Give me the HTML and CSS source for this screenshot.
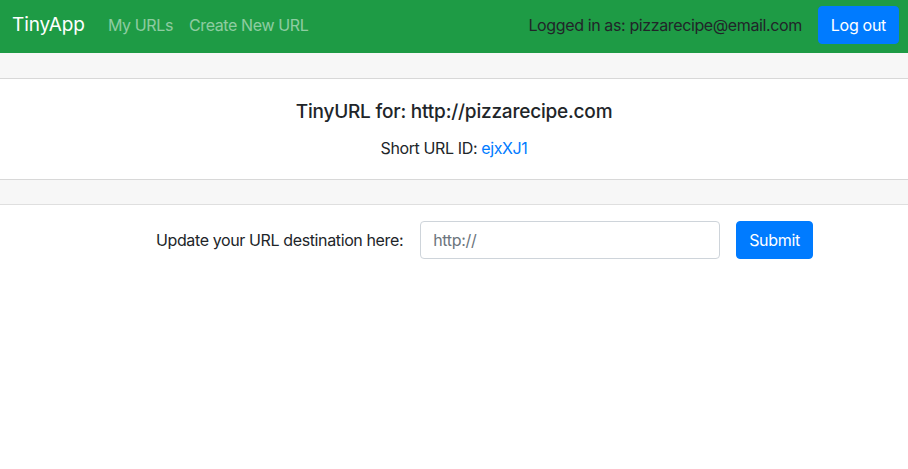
FILE: index.html
```html
<!DOCTYPE html>
<html lang="en">
<head>
<meta charset="utf-8">
<title>TinyApp</title>
<link rel="stylesheet" href="styles.css">
</head>
<body>
<nav class="navbar">
  <a class="brand" href="#">TinyApp</a>
  <div class="nav-links">
    <a class="nav-link" href="#">My URLs</a>
    <a class="nav-link" href="#">Create New URL</a>
  </div>
  <div class="nav-right">
    <span class="logged">Logged in as: pizzarecipe@email.com</span>
    <button class="btn btn-primary logout">Log out</button>
  </div>
</nav>
<div class="card">
  <div class="card-header"></div>
  <div class="card-body">
    <h5 class="card-title">TinyURL for: http://pizzarecipe.com</h5>
    <p class="card-text">Short URL ID: <a href="#">ejxXJ1</a></p>
  </div>
  <div class="card-footer"></div>
</div>
<form class="update-form">
  <label class="form-label" for="longURL">Update your URL destination here:</label>
  <input class="form-control" id="longURL" type="text" placeholder="http://">
  <button class="btn btn-primary submit" type="button">Submit</button>
</form>
</body>
</html>
```
FILE: styles.css
```css
* { box-sizing: border-box; }
html, body { margin: 0; padding: 0; }
body {
  font-family: Inter, "Liberation Sans", sans-serif;
  font-size: 16px;
  line-height: 1.5;
  letter-spacing: -0.38px;
  color: #212529;
  background: #fff;
  width: 908px;
  height: 469px;
  overflow: hidden;
}
a { text-decoration: none; }
.navbar {
  display: flex;
  align-items: center;
  height: 53px;
  padding: 0 9px 3px 12px;
  background: #1e9b45;
}
.brand {
  color: #fff;
  font-size: 19px;
  line-height: 30px;
  letter-spacing: -0.1px;
  margin-right: 23px;
}
.nav-links { display: flex; gap: 16px; }
.nav-link {
  color: rgba(255,255,255,0.5);
  font-size: 16px;
}
.nav-right {
  margin-left: auto;
  display: flex;
  align-items: center;
  gap: 16px;
}
.logged { color: #212529; }
.btn {
  font-family: inherit;
  font-size: 16px;
  line-height: 24px;
  letter-spacing: -0.3px;
  padding: 6px 12px;
  border: 1px solid transparent;
  border-radius: 4px;
  cursor: pointer;
}
.btn-primary { background: #007bff; border-color: #007bff; color: #fff; }
.logout { height: 38px; padding: 6px 12px; }
.card {
  border-bottom: 1px solid rgba(0,0,0,0.125);
}
.card-header, .card-footer {
  height: 26px;
  background: #f7f7f7;
}
.card-header { border-bottom: 1px solid rgba(0,0,0,0.125); }
.card-footer { border-top: 1px solid rgba(0,0,0,0.125); height: 25px; }
.card-body {
  height: 100px;
  text-align: center;
  padding-top: 21px;
}
.card-title {
  margin: 0 0 12px;
  font-size: 19px;
  font-weight: 500;
  line-height: 24px;
  letter-spacing: -0.2px;
}
.card-text { margin: 0; }
.card-text a { color: #007bff; }
.update-form {
  display: flex;
  align-items: center;
  justify-content: center;
  padding: 16px 0 0 61px;
}
.form-label { margin-right: 17px; }
.form-control {
  width: 300px;
  height: 38px;
  padding: 6px 12px;
  font-family: inherit;
  font-size: 16px;
  letter-spacing: -0.3px;
  color: #495057;
  border: 1px solid #ced4da;
  border-radius: 4px;
  margin-right: 16px;
}
.form-control::placeholder { color: #6c757d; }
.submit { height: 38px; }
```
